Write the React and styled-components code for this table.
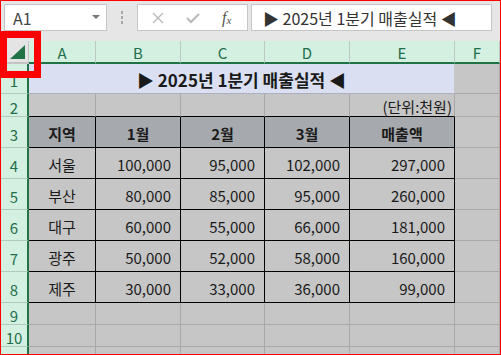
import React from 'react';
import styled, { createGlobalStyle } from 'styled-components';

const GlobalStyle = createGlobalStyle`
  body {
    margin: 0;
    overflow: hidden;
    background: #ffffff;
  }
`;

const GREEN = '#217346';
const GRID = '#a9a9a9';
const KR = `"Noto Sans CJK KR", "Noto Sans", sans-serif`;

const Frame = styled.div`
  position: relative;
  width: 501px;
  height: 355px;
  box-sizing: border-box;
  border: 1px solid #ff0000;
  overflow: hidden;
  background: #e6e6e6;
  font-family: ${KR};
`;

const TopBar = styled.div`
  height: 40px;
  box-sizing: border-box;
  display: flex;
  align-items: flex-start;
  padding: 3px 0 0 3px;
  background: #e6e6e6;
`;

const NameBox = styled.div`
  width: 103px;
  height: 27px;
  box-sizing: border-box;
  background: #fff;
  border: 1px solid #c6c6c6;
  display: flex;
  align-items: center;
  justify-content: space-between;
  padding: 0 6px 0 8px;
  font-size: 16px;
  color: #444;
`;

const DropArrow = styled.span`
  width: 0;
  height: 0;
  border-left: 4px solid transparent;
  border-right: 4px solid transparent;
  border-top: 4px solid #777;
  margin-top: -2px;
`;

const Dots = styled.div`
  width: 30px;
  height: 27px;
  display: flex;
  flex-direction: column;
  align-items: center;
  justify-content: center;
  gap: 2px;

  span {
    width: 2px;
    height: 3px;
    background: #a8a8a8;
  }
`;

const FxBox = styled.div`
  width: 111px;
  height: 27px;
  box-sizing: border-box;
  background: #fff;
  border: 1px solid #c6c6c6;
  display: grid;
  grid-template-columns: 12px 14px 18px;
  column-gap: 22px;
  align-items: center;
  padding-left: 14px;
`;

const Fx = styled.span`
  font-family: "Liberation Serif", serif;
  font-style: italic;
  font-size: 16px;
  color: #555;
  line-height: 1;

  sub {
    font-size: 11px;
    vertical-align: -1px;
  }
`;

const FormulaBox = styled.div`
  width: 241px;
  height: 27px;
  margin-left: 3px;
  box-sizing: border-box;
  background: #fff;
  border: 1px solid #c6c6c6;
  display: flex;
  align-items: center;
  padding-left: 11px;
  font-size: 16px;
  color: #333;
  white-space: nowrap;
`;

const Sheet = styled.div`
  display: grid;
  grid-template-columns: 28px 67px 85px 84px 85px 105px 1fr;
  grid-template-rows: 23px 30px 23px repeat(6, 31px) 22px 22px 22px;
  background: #c6c6c6;
`;

const Corner = styled.div`
  position: relative;
  background: #e4e4e4;
  border-right: 1px solid #c4c4c4;
  border-bottom: 2px solid #c4c4c4;

  &::after {
    content: '';
    position: absolute;
    right: 3px;
    bottom: 3px;
    width: 0;
    height: 0;
    border-left: 15px solid transparent;
    border-bottom: 14px solid ${GREEN};
  }
`;

const ColHead = styled.div`
  background: #d3f0e0;
  border-right: 1px solid #bcc9c1;
  border-bottom: 2px solid ${GREEN};
  display: flex;
  align-items: center;
  justify-content: center;
  padding-top: 2px;
  font-size: 15px;
  color: #1f6e4c;
`;

const RowHead = styled.div`
  background: #d3f0e0;
  border-right: 2px solid ${GREEN};
  border-bottom: 1px solid #b3c9bb;
  display: flex;
  align-items: center;
  justify-content: center;
  padding-top: 4px;
  font-size: 15px;
  color: #1f6e4c;
`;

const Cell = styled.div`
  box-sizing: border-box;
  background: ${(p) => p.$bg || '#c6c6c6'};
  border-right: 1px solid ${(p) => (p.$boxed ? '#000' : GRID)};
  border-bottom: 1px solid ${(p) => (p.$boxed || p.$under ? '#000' : GRID)};
  display: flex;
  align-items: center;
  justify-content: ${(p) => p.$align || 'flex-start'};
  padding: 2px ${(p) => p.$pr || 0}px 0 0;
  font-size: 15px;
  font-weight: ${(p) => (p.$bold ? 700 : 400)};
  color: #1a1a1a;
  white-space: nowrap;
  line-height: 1;
`;

const Title = styled(Cell)`
  grid-column: span 5;
  background: #dae0f1;
  border-right-color: #c6c6c6;
  border-bottom-color: #aab0c0;
  font-size: 17px;
  font-weight: 700;
  justify-content: center;
`;

const Marker = styled.div`
  position: absolute;
  left: -1px;
  top: 30px;
  width: 41px;
  height: 47px;
  box-sizing: border-box;
  border: 7px solid #ff0000;
`;

const cols = ['A', 'B', 'C', 'D', 'E', 'F'];
const heads = ['지역', '1월', '2월', '3월', '매출액'];
const data = [
  ['서울', 100000, 95000, 102000],
  ['부산', 80000, 85000, 95000],
  ['대구', 60000, 55000, 66000],
  ['광주', 50000, 52000, 58000],
  ['제주', 30000, 33000, 36000],
];

const fmt = (n) => n.toLocaleString('en-US');

function IconX() {
  return (
    <svg width="12" height="12" viewBox="0 0 12 12">
      <path d="M1 1 L11 11 M11 1 L1 11" stroke="#b8b8b8" strokeWidth="1.3" fill="none" />
    </svg>
  );
}

function IconCheck() {
  return (
    <svg width="14" height="12" viewBox="0 0 14 12">
      <path d="M1 6 L5 10 L13 2" stroke="#b8b8b8" strokeWidth="2" fill="none" />
    </svg>
  );
}

function EmptyRow({ n }) {
  return (
    <>
      <RowHead>{n}</RowHead>
      {cols.map((c) => (
        <Cell key={c} />
      ))}
    </>
  );
}

export default function App() {
  const title = '▶ 2025년 1분기 매출실적 ◀';
  return (
    <Frame>
      <GlobalStyle />
      <TopBar>
        <NameBox>
          A1
          <DropArrow />
        </NameBox>
        <Dots>
          <span />
          <span />
          <span />
        </Dots>
        <FxBox>
          <IconX />
          <IconCheck />
          <Fx>
            f<sub>x</sub>
          </Fx>
        </FxBox>
        <FormulaBox>{title}</FormulaBox>
      </TopBar>

      <Sheet>
        <Corner />
        {cols.map((c) => (
          <ColHead key={c}>{c}</ColHead>
        ))}

        <RowHead>1</RowHead>
        <Title>{title}</Title>
        <Cell />

        <RowHead>2</RowHead>
        <Cell $under />
        <Cell $under />
        <Cell $under />
        <Cell $under />
        <Cell $under $align="flex-end" $pr={2}>
          (단위:천원)
        </Cell>
        <Cell />

        <RowHead>3</RowHead>
        {heads.map((h) => (
          <Cell key={h} $boxed $bold $bg="#a6a9ad" $align="center">
            {h}
          </Cell>
        ))}
        <Cell />

        {data.map((r, i) => {
          const total = r[1] + r[2] + r[3];
          return (
            <React.Fragment key={r[0]}>
              <RowHead>{i + 4}</RowHead>
              <Cell $boxed $align="center">
                {r[0]}
              </Cell>
              {[r[1], r[2], r[3], total].map((v, j) => (
                <Cell key={j} $boxed $align="flex-end" $pr={9}>
                  {fmt(v)}
                </Cell>
              ))}
              <Cell />
            </React.Fragment>
          );
        })}

        <EmptyRow n={9} />
        <EmptyRow n={10} />
        <EmptyRow n={11} />
      </Sheet>

      <Marker />
    </Frame>
  );
}
